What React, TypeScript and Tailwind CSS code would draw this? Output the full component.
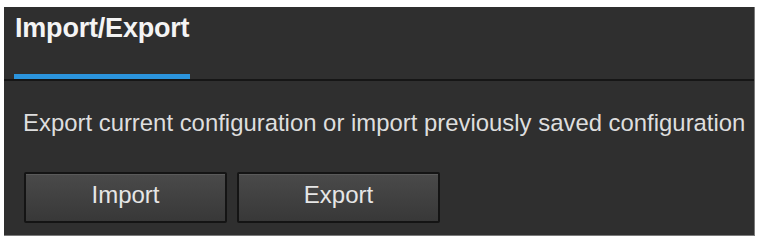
const buttons = ["Import", "Export"];

export default function App() {
  return (
    <div className="h-[239px] w-[759px] bg-white pl-[4px] pt-[7px] font-['Liberation_Sans',Arial,sans-serif]">
      <div className="flex h-[229px] w-[751px] flex-col border-r border-b border-[#7a7a7a] bg-[#2f2f2f]">
        <div className="pl-[10px] pt-[8px]">
          <h1 className="pl-[1px] text-[27px] font-bold leading-none tracking-[-0.2px] text-[#f4f4f4]">Import/Export</h1>
          <div className="mt-[32px] h-[5px] w-[176px] bg-[#2b94dd]" />
        </div>
        <div className="h-[2px] bg-[#161616]" />
        <div className="flex flex-col pl-[19px] pt-[30px]">
          <p className="text-[23.9px] leading-none text-[#dedede]">
            Export current configuration or import previously saved configuration
          </p>
          <div className="mt-[37px] flex gap-[10px] pl-[1px]">
            {buttons.map((b) => (
              <button
                key={b}
                className="flex h-[51px] w-[203px] items-center justify-center rounded-[2px] border-2 border-[#141414] bg-gradient-to-b from-[#4a4a4a] to-[#383838] pb-[4px] text-[24px] leading-none text-[#e6e6e6] shadow-[inset_0_1px_0_#5a5a5a]"
              >
                {b}
              </button>
            ))}
          </div>
        </div>
      </div>
    </div>
  );
}
